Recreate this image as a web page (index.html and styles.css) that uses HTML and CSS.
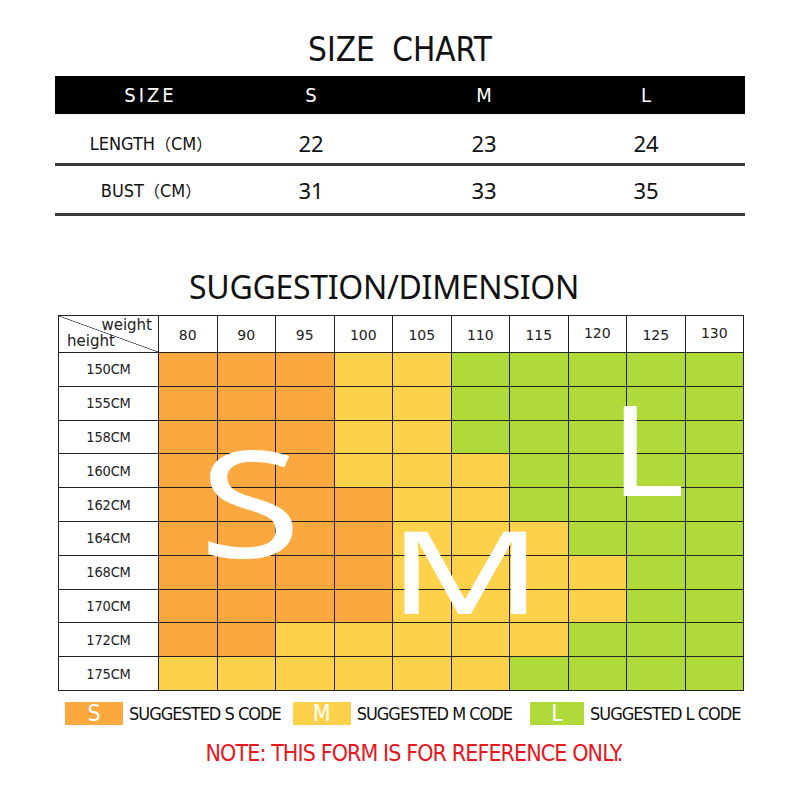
FILE: index.html
```html
<!DOCTYPE html>
<html lang="en">
<head>
<meta charset="utf-8">
<title>Size Chart</title>
<link rel="stylesheet" href="styles.css">
</head>
<body>
<div class="page">
  <h1 class="title-chart">SIZE CHART</h1>
  <div class="size-table">
    <div class="st-row st-head">
      <span class="head-size">SIZE</span><span>S</span><span>M</span><span>L</span><span></span>
    </div>
    <div class="st-row st-r1">
      <span class="st-label">LENGTH<span class="paren">（</span>CM<span class="paren">）</span></span><span class="st-num">22</span><span class="st-num">23</span><span class="st-num">24</span><span></span>
    </div>
    <div class="st-row st-r2">
      <span class="st-label">BUST<span class="paren">（</span>CM<span class="paren">）</span></span><span class="st-num">31</span><span class="st-num">33</span><span class="st-num">35</span><span></span>
    </div>
  </div>

  <h2 class="title-sugg">SUGGESTION/DIMENSION</h2>

  <div class="grid">
    <div class="cell corner"><span class="w">weight</span><span class="h">height</span></div>
    <div class="cell hd">80</div><div class="cell hd">90</div><div class="cell hd">95</div><div class="cell hd">100</div><div class="cell hd">105</div><div class="cell hd">110</div><div class="cell hd">115</div><div class="cell hd hi">120</div><div class="cell hd">125</div><div class="cell hd hi">130</div>

    <div class="cell lb">150CM</div><div class="cell o"></div><div class="cell o"></div><div class="cell o"></div><div class="cell y"></div><div class="cell y"></div><div class="cell g"></div><div class="cell g"></div><div class="cell g"></div><div class="cell g"></div><div class="cell g"></div>
    <div class="cell lb">155CM</div><div class="cell o"></div><div class="cell o"></div><div class="cell o"></div><div class="cell y"></div><div class="cell y"></div><div class="cell g"></div><div class="cell g"></div><div class="cell g"></div><div class="cell g"></div><div class="cell g"></div>
    <div class="cell lb">158CM</div><div class="cell o"></div><div class="cell o"></div><div class="cell o"></div><div class="cell y"></div><div class="cell y"></div><div class="cell g"></div><div class="cell g"></div><div class="cell g"></div><div class="cell g"></div><div class="cell g"></div>
    <div class="cell lb">160CM</div><div class="cell o"></div><div class="cell o"></div><div class="cell o"></div><div class="cell y"></div><div class="cell y"></div><div class="cell y"></div><div class="cell g"></div><div class="cell g"></div><div class="cell g"></div><div class="cell g"></div>
    <div class="cell lb">162CM</div><div class="cell o"></div><div class="cell o"></div><div class="cell o"></div><div class="cell o"></div><div class="cell y"></div><div class="cell y"></div><div class="cell g"></div><div class="cell g"></div><div class="cell g"></div><div class="cell g"></div>
    <div class="cell lb">164CM</div><div class="cell o"></div><div class="cell o"></div><div class="cell o"></div><div class="cell o"></div><div class="cell y"></div><div class="cell y"></div><div class="cell y"></div><div class="cell g"></div><div class="cell g"></div><div class="cell g"></div>
    <div class="cell lb">168CM</div><div class="cell o"></div><div class="cell o"></div><div class="cell o"></div><div class="cell o"></div><div class="cell y"></div><div class="cell y"></div><div class="cell y"></div><div class="cell y"></div><div class="cell g"></div><div class="cell g"></div>
    <div class="cell lb">170CM</div><div class="cell o"></div><div class="cell o"></div><div class="cell o"></div><div class="cell o"></div><div class="cell y"></div><div class="cell y"></div><div class="cell y"></div><div class="cell y"></div><div class="cell g"></div><div class="cell g"></div>
    <div class="cell lb">172CM</div><div class="cell o"></div><div class="cell o"></div><div class="cell y"></div><div class="cell y"></div><div class="cell y"></div><div class="cell y"></div><div class="cell y"></div><div class="cell g"></div><div class="cell g"></div><div class="cell g"></div>
    <div class="cell lb">175CM</div><div class="cell y"></div><div class="cell y"></div><div class="cell y"></div><div class="cell y"></div><div class="cell y"></div><div class="cell y"></div><div class="cell g"></div><div class="cell g"></div><div class="cell g"></div><div class="cell g"></div>

    <span class="big big-s">S</span>
    <span class="big big-m">M</span>
    <span class="big big-l">L</span>
  </div>

  <div class="legend">
    <div class="lg-item"><span class="lg-box o">S</span><span class="lg-text">SUGGESTED S CODE</span></div>
    <div class="lg-item lg-2"><span class="lg-box y">M</span><span class="lg-text">SUGGESTED M CODE</span></div>
    <div class="lg-item lg-3"><span class="lg-box g">L</span><span class="lg-text">SUGGESTED L CODE</span></div>
  </div>

  <p class="note">NOTE: THIS FORM IS FOR REFERENCE ONLY.</p>
</div>
</body>
</html>
```

FILE: styles.css
```css
body {
  margin: 0;
  background: #ffffff;
  color: #111111;
  font-family: "Noto Sans", sans-serif;
}

.page {
  width: 800px;
}

.title-chart {
  margin: 0 0 6px 0;
  padding-top: 30px;
  height: 40px;
  line-height: 40px;
  text-align: center;
  font-family: "Liberation Sans Narrow", "DejaVu Sans Condensed", "Liberation Sans", sans-serif;
  font-size: 33px;
  font-weight: normal;
  word-spacing: 8px;
  color: #111;
}

.size-table {
  margin: 0 55px;
}

.st-row {
  display: grid;
  grid-template-columns: 188px 136px 210px 114px 1fr;
  align-items: center;
  text-align: center;
  box-sizing: border-box;
}

.st-head {
  height: 38px;
  background: #000000;
  color: #ffffff;
  font-family: "Liberation Sans Narrow", "DejaVu Sans Condensed", "Liberation Sans", sans-serif;
  font-size: 20px;
}

.head-size {
  letter-spacing: 3px;
  padding-left: 3px;
}

.st-r1 {
  height: 52px;
  padding-top: 8px;
  border-bottom: 3px solid #3a3a3a;
}

.st-r2 {
  height: 50px;
  border-bottom: 3px solid #3a3a3a;
}

.st-label {
  font-family: "Liberation Sans Narrow", "DejaVu Sans Condensed", "Noto Sans CJK SC", sans-serif;
  font-size: 18px;
  color: #111;
  padding-left: 4px;
}

.paren {
  font-family: "Noto Sans CJK SC", sans-serif;
  font-size: 16px;
}

.st-num {
  font-family: "Noto Sans", sans-serif;
  font-size: 22px;
  color: #111;
}

.title-sugg {
  margin: 0 0 8px 0;
  padding: 51px 32px 0 0;
  height: 40px;
  line-height: 40px;
  text-align: center;
  font-family: "Noto Sans", sans-serif;
  font-size: 32px;
  font-weight: normal;
  letter-spacing: -0.3px;
  color: #111;
}

.grid {
  position: relative;
  margin-left: 58px;
  width: 686px;
  display: grid;
  grid-template-columns: 100px repeat(10, 1fr);
  grid-template-rows: 37px repeat(10, 33.8px);
  border-top: 1px solid #222;
  border-left: 1px solid #222;
  box-sizing: border-box;
  overflow: hidden;
}

.cell {
  border-right: 1px solid #222;
  border-bottom: 1px solid #222;
  display: flex;
  align-items: center;
  justify-content: center;
  font-family: "DejaVu Sans", sans-serif;
  color: #222;
}

.hd {
  font-size: 14px;
  padding-top: 2px;
}

.hd.hi {
  padding-top: 0;
  padding-bottom: 2px;
}

.lb {
  font-family: "DejaVu Sans Condensed", "DejaVu Sans", sans-serif;
  font-size: 14.5px;
  letter-spacing: -0.2px;
}

.corner {
  flex-direction: column;
  align-items: stretch;
  justify-content: flex-start;
  font-size: 15px;
  line-height: 16px;
  padding-top: 1px;
  background: linear-gradient(to top right, transparent calc(50% - 0.7px), #333 50%, transparent calc(50% + 0.7px));
}

.corner .w {
  text-align: right;
  padding-right: 6px;
}

.corner .h {
  text-align: left;
  padding-left: 8px;
}

.o { background: #fba83f; }
.y { background: #fed14b; }
.g { background: #b0da3a; }

.big {
  position: absolute;
  z-index: 2;
  color: #ffffff;
  font-family: "Noto Sans", sans-serif;
  line-height: 1;
  transform-origin: 0 0;
}

.big-s {
  font-size: 148px;
  left: 140px;
  top: 111px;
  transform: scaleX(1.26);
}

.big-m {
  font-size: 116px;
  left: 329px;
  top: 195px;
  transform: scaleX(1.47);
}

.big-l {
  font-size: 126px;
  left: 551px;
  top: 68px;
  transform: scaleX(1.13);
}

.legend {
  display: flex;
  margin: 11px 0 0 65px;
  height: 23px;
  align-items: center;
}

.lg-item {
  display: flex;
  align-items: center;
  gap: 6px;
}

.lg-2 { margin-left: 12px; }
.lg-3 { margin-left: 18px; }

.lg-box {
  width: 58px;
  height: 23px;
  display: flex;
  align-items: center;
  justify-content: center;
  color: #ffffff;
  font-family: "Liberation Sans Narrow", "DejaVu Sans Condensed", "Liberation Sans", sans-serif;
  font-size: 23px;
}

.lg-3 .lg-box { width: 54px; }

.lg-text {
  font-family: "Liberation Sans Narrow", "DejaVu Sans Condensed", "Liberation Sans", sans-serif;
  font-size: 18px;
  letter-spacing: -1px;
  color: #111;
}

.note {
  margin: 14px 0 0 0;
  padding-left: 28px;
  line-height: 28px;
  text-align: center;
  font-family: "Liberation Sans Narrow", "DejaVu Sans Condensed", "Liberation Sans", sans-serif;
  font-size: 23px;
  letter-spacing: -0.9px;
  color: #e8161e;
}
```
